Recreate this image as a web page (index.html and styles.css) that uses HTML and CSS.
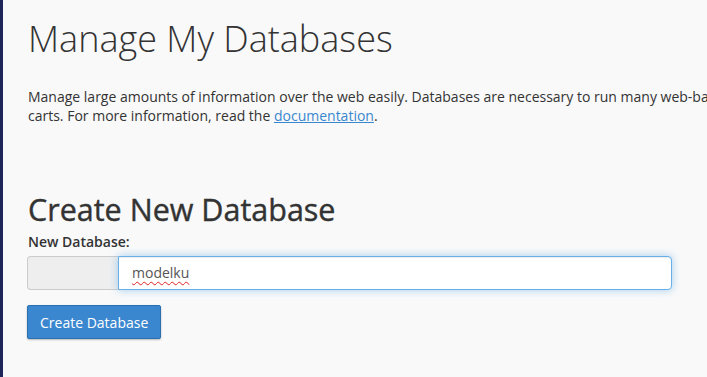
FILE: index.html
```html
<!DOCTYPE html>
<html lang="en">
<head>
    <meta charset="UTF-8">
    <title>Manage My Databases</title>
    <link rel="stylesheet" href="styles.css">
</head>
<body>
    <div class="page">
        <h1 class="page-title">Manage My Databases</h1>
        <p class="intro">
            Manage large amounts of information over the web easily. Databases are necessary to run many web-based applications, such as bulletin boards, content management systems, and online shopping<br>
            carts. For more information, read the <a href="#">documentation</a>.
        </p>

        <h2 class="section-title">Create New Database</h2>
        <form class="create-form">
            <label class="field-label" for="db">New Database:</label>
            <div class="input-group">
                <span class="addon"></span>
                <div class="field" id="db" role="textbox" contenteditable="true" spellcheck="false"><span class="misspelled">modelku</span></div>
            </div>
            <button type="submit" class="btn-primary">Create Database</button>
        </form>
    </div>
</body>
</html>
```

FILE: styles.css
```css
* {
    box-sizing: border-box;
}

html, body {
    margin: 0;
    padding: 0;
    height: 100%;
}

body {
    font-family: 'Open Sans', 'Liberation Sans', sans-serif;
    background: #f9f9f9;
    color: #333;
    border-left: 3px solid #1d2657;
    overflow: hidden;
}

.page {
    padding: 0 0 0 24px;
}

.page-title {
    font-size: 36px;
    font-weight: 300;
    margin: 0 0 0 1px;
    padding-top: 17px;
    line-height: 44px;
}

.intro {
    font-size: 14px;
    line-height: 19px;
    margin: 26px 0 0 1px;
    white-space: nowrap;
}

.intro a {
    color: #3a87d0;
    text-decoration: underline;
}

.section-title {
    font-size: 30.5px;
    font-weight: 500;
    margin: 66px 0 0 1px;
    line-height: 36px;
    -webkit-text-stroke: 0.4px #333;
}

.field-label {
    display: block;
    font-size: 14px;
    font-weight: 600;
    margin: 6px 0 0 1px;
    line-height: 18px;
}

.input-group {
    display: flex;
    width: 645px;
    height: 34px;
    margin-top: 5px;
}

.addon {
    width: 91px;
    background: #eee;
    border: 1px solid #ccc;
    border-right: none;
    border-radius: 4px 0 0 4px;
}

.field {
    flex: 1;
    font-size: 14px;
    line-height: 20px;
    color: #555;
    background: #fff;
    padding: 6px 13px;
    border: 1px solid #66afe9;
    border-radius: 0 4px 4px 0;
    outline: none;
    box-shadow: inset 0 1px 1px rgba(0,0,0,.075), 0 0 8px rgba(102,175,233,.6);
}

.misspelled {
    text-decoration: underline wavy #e02020;
    text-decoration-thickness: 1px;
    text-underline-offset: 3px;
}

.btn-primary {
    display: block;
    margin-top: 15px;
    height: 34px;
    padding: 0 12px;
    font-family: inherit;
    font-size: 14px;
    color: #fff;
    background: #3a87d0;
    border: 1px solid #2a6fb0;
    border-radius: 2px;
    box-shadow: 0 1px 2px rgba(0,0,0,.25);
}
```
